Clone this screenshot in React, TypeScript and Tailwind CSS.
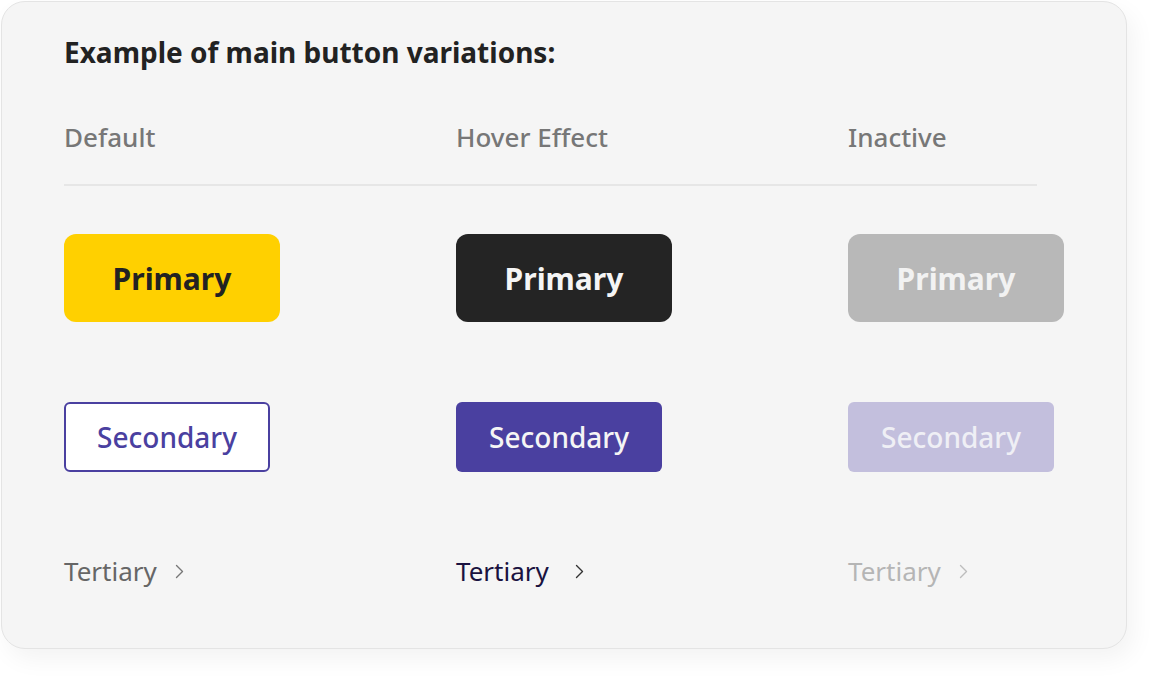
import React from "react";

const font = { fontFamily: '"Noto Sans", "Open Sans", sans-serif' };

function Chevron({ color }: { color: string }) {
  return (
    <svg width="9" height="15" viewBox="0 0 9 15" fill="none" className="shrink-0">
      <polyline points="1.5,1.5 7.5,7.5 1.5,13.5" stroke={color} strokeWidth="1.4" strokeLinecap="round" strokeLinejoin="round" fill="none" />
    </svg>
  );
}

export default function App() {
  return (
    <div className="w-[1154px] h-[678px] bg-white p-px" style={font}>
      <div className="w-[1126px] h-[648px] rounded-[24px] border border-[#e4e4e4] bg-[#f5f5f5] shadow-[6px_10px_24px_rgba(0,0,0,0.05)] pl-[62px] pt-[33px]">
        <h1 className="text-[28px] leading-[34px] font-bold text-[#222222]">Example of main button variations:</h1>

        <div className="grid grid-cols-[392px_392px_320px] mt-[52px] text-[26px] leading-[32px] font-medium text-[#777777]">
          <div>Default</div>
          <div>Hover Effect</div>
          <div>Inactive</div>
        </div>

        <div className="w-[973px] h-[2px] bg-[#e6e6e6] mt-[31px]" />

        <div className="grid grid-cols-[392px_392px_320px] mt-[48px]">
          <div className="w-[216px] h-[88px] rounded-[12px] bg-[#ffd000] flex items-center justify-center text-[30px] font-bold text-[#222222]">Primary</div>
          <div className="w-[216px] h-[88px] rounded-[12px] bg-[#242424] flex items-center justify-center text-[30px] font-bold text-[#f5f5f5]">Primary</div>
          <div className="w-[216px] h-[88px] rounded-[12px] bg-[#b8b8b8] flex items-center justify-center text-[30px] font-bold text-[#f2f2f2]">Primary</div>
        </div>

        <div className="grid grid-cols-[392px_392px_320px] mt-[80px]">
          <div className="w-[206px] h-[70px] rounded-[6px] bg-white border-2 border-[#4a40a0] flex items-center justify-center text-[28px] font-medium text-[#4a40a0]">Secondary</div>
          <div className="w-[206px] h-[70px] rounded-[6px] bg-[#4a40a0] flex items-center justify-center text-[28px] font-medium text-[#f5f5f5]">Secondary</div>
          <div className="w-[206px] h-[70px] rounded-[6px] bg-[#c3bfdd] flex items-center justify-center text-[28px] font-medium text-[#efeff5]">Secondary</div>
        </div>

        <div className="grid grid-cols-[392px_392px_320px] mt-[82px] text-[26px] leading-[34px]">
          <div className="flex items-center gap-[18px] text-[#666666]">
            <span>Tertiary</span>
            <Chevron color="#777777" />
          </div>
          <div className="flex items-center gap-[26px] text-[#1a1240]">
            <span>Tertiary</span>
            <Chevron color="#333333" />
          </div>
          <div className="flex items-center gap-[18px] text-[#b5b5b5]">
            <span>Tertiary</span>
            <Chevron color="#bdbdbd" />
          </div>
        </div>
      </div>
    </div>
  );
}
